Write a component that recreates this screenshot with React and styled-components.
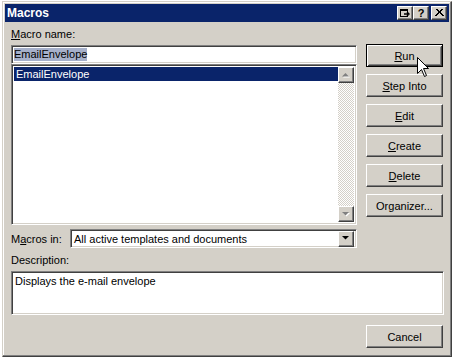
import React from 'react';
import styled, { createGlobalStyle, css } from 'styled-components';

const FACE = '#d4d0c8';
const NAVY = '#0a246a';

const GlobalStyle = createGlobalStyle`
  html, body {
    margin: 0;
    padding: 0;
    background: #fff;
  }
  body {
    font-family: "Liberation Sans", Arial, sans-serif;
    font-size: 11px;
    color: #000;
  }
  * { box-sizing: border-box; }
`;

const raised = css`
  border: 1px solid;
  border-color: #fff #404040 #404040 #fff;
  box-shadow: inset -1px -1px #808080, inset 1px 1px ${FACE};
`;

const sunken = css`
  border: 1px solid;
  border-color: #808080 #fff #fff #808080;
  box-shadow: inset 1px 1px #404040, inset -1px -1px ${FACE};
`;

const Window = styled.div`
  margin: 1px 0 0 2px;
  width: 450px;
  height: 356px;
  background: ${FACE};
  border: 1px solid;
  border-color: ${FACE} #404040 #404040 ${FACE};
  box-shadow: inset -1px -1px #808080, inset 1px 1px #fff;
  padding: 2px;
  display: flex;
  flex-direction: column;
  position: relative;
`;

const TitleBar = styled.div`
  height: 18px;
  background: ${NAVY};
  display: flex;
  align-items: center;
  padding: 0 2px 0 2px;
`;

const Title = styled.div`
  flex: 1;
  color: #fff;
  font-weight: bold;
  font-size: 12px;
`;

const CaptionButtons = styled.div`
  display: flex;
`;

const CaptionButton = styled.div`
  width: 16px;
  height: 14px;
  background: ${FACE};
  ${raised};
  display: flex;
  align-items: center;
  justify-content: center;
  margin-left: ${p => (p.$gap ? '2px' : '0')};
  font-weight: bold;
  font-size: 11px;
  line-height: 1;
`;

const Body = styled.div`
  flex: 1;
  padding: 6px 6px 0 6px;
  display: flex;
  flex-direction: column;
`;

const Top = styled.div`
  display: grid;
  grid-template-columns: 346px 77px;
  column-gap: 9px;
`;

const LeftCol = styled.div`
  display: flex;
  flex-direction: column;
`;

const Label = styled.div`
  height: 13px;
  line-height: 13px;
  margin-bottom: 4px;
`;

const TextField = styled.div`
  height: 19px;
  background: #fff;
  ${sunken};
  padding: 2px 2px;
  display: flex;
  align-items: center;
`;

const SelectedText = styled.span`
  background: #a6b0ca;
  line-height: 13px;
`;

const ListBox = styled.div`
  height: 161px;
  background: #fff;
  ${sunken};
  padding: 2px;
  display: flex;
`;

const ListItems = styled.div`
  flex: 1;
`;

const ListItem = styled.div`
  height: 14px;
  line-height: 14px;
  padding-left: 2px;
  background: ${p => (p.$selected ? NAVY : 'transparent')};
  color: ${p => (p.$selected ? '#fff' : '#000')};
`;

const ScrollBar = styled.div`
  width: 16px;
  display: flex;
  flex-direction: column;
  background-color: #fff;
  background-image:
    linear-gradient(45deg, ${FACE} 25%, transparent 25%, transparent 75%, ${FACE} 75%),
    linear-gradient(45deg, ${FACE} 25%, transparent 25%, transparent 75%, ${FACE} 75%);
  background-size: 2px 2px;
  background-position: 0 0, 1px 1px;
`;

const ScrollTrack = styled.div`
  flex: 1;
`;

const ArrowButton = styled.div`
  width: 16px;
  height: 16px;
  background: ${FACE};
  ${raised};
  display: flex;
  align-items: center;
  justify-content: center;
`;

const ComboRow = styled.div`
  margin-top: 4px;
  display: flex;
  align-items: center;
`;

const ComboLabel = styled.div`
  width: 59px;
`;

const Combo = styled.div`
  flex: 1;
  height: 19px;
  background: #fff;
  ${sunken};
  padding: 2px;
  display: flex;
  align-items: center;
`;

const ComboText = styled.div`
  flex: 1;
  padding-left: 1px;
`;

const RightCol = styled.div`
  display: flex;
  flex-direction: column;
  gap: 7px;
  padding-top: 16px;
`;

const Button = styled.div`
  height: 23px;
  width: 77px;
  background: ${FACE};
  display: flex;
  align-items: center;
  justify-content: center;
  ${p =>
    p.$default
      ? css`
          border: 1px solid #000;
          box-shadow: inset 1px 1px #fff, inset -1px -1px #404040,
            inset 2px 2px ${FACE}, inset -2px -2px #808080;
        `
      : raised};
`;

const DescLabel = styled(Label)`
  margin-top: 6px;
`;

const DescBox = styled.div`
  height: 44px;
  width: 433px;
  background: #fff;
  ${sunken};
  padding: 3px 3px;
`;

const Footer = styled.div`
  margin-top: 10px;
  display: flex;
  justify-content: flex-end;
`;

const Cursor = styled.svg`
  position: absolute;
  left: 414px;
  top: 55px;
`;

const Key = styled.span`
  text-decoration: underline;
  text-underline-offset: 1px;
`;

const Triangle = ({ dir = 'up', disabled }) => {
  const pts = dir === 'up' ? '3.5,0 0,3.5 7,3.5' : '0,0 7,0 3.5,3.5';
  return (
    <svg width="8" height="5" viewBox="0 0 8 5">
      {disabled && <polygon points={pts} transform="translate(1,1)" fill="#fff" />}
      <polygon points={pts} fill={disabled ? '#808080' : '#000'} />
    </svg>
  );
};

const HelpIcon = () => (
  <svg width="10" height="9" viewBox="0 0 10 9">
    <rect x="0.5" y="0.5" width="7" height="7" fill="none" stroke="#000" />
    <rect x="0" y="0" width="8" height="2" fill="#000" />
    <path d="M4 5 H8 M7 3 L9 5 L7 7" stroke="#000" strokeWidth="1.4" fill="none" />
  </svg>
);

const CloseIcon = () => (
  <svg width="9" height="8" viewBox="0 0 9 8">
    <path d="M1 0 L8 7 M8 0 L1 7 M2 0 L9 7 M7 0 L0 7" stroke="#000" strokeWidth="1" />
  </svg>
);

const App = () => (
  <>
    <GlobalStyle />
    <Window>
      <TitleBar>
        <Title>Macros</Title>
        <CaptionButtons>
          <CaptionButton><HelpIcon /></CaptionButton>
          <CaptionButton>?</CaptionButton>
          <CaptionButton $gap><CloseIcon /></CaptionButton>
        </CaptionButtons>
      </TitleBar>
      <Body>
        <Top>
          <LeftCol>
            <Label><Key>M</Key>acro name:</Label>
            <TextField><SelectedText>EmailEnvelope</SelectedText></TextField>
            <ListBox>
              <ListItems>
                <ListItem $selected>EmailEnvelope</ListItem>
              </ListItems>
              <ScrollBar>
                <ArrowButton><Triangle dir="up" disabled /></ArrowButton>
                <ScrollTrack />
                <ArrowButton><Triangle dir="down" disabled /></ArrowButton>
              </ScrollBar>
            </ListBox>
            <ComboRow>
              <ComboLabel>M<Key>a</Key>cros in:</ComboLabel>
              <Combo>
                <ComboText>All active templates and documents</ComboText>
                <ArrowButton><Triangle dir="down" /></ArrowButton>
              </Combo>
            </ComboRow>
          </LeftCol>
          <RightCol>
            <Button $default><Key>R</Key>un</Button>
            <Button><Key>S</Key>tep Into</Button>
            <Button><Key>E</Key>dit</Button>
            <Button><Key>C</Key>reate</Button>
            <Button><Key>D</Key>elete</Button>
            <Button>Organizer...</Button>
          </RightCol>
        </Top>
        <DescLabel>Description:</DescLabel>
        <DescBox>Displays the e-mail envelope</DescBox>
        <Footer>
          <Button>Cancel</Button>
        </Footer>
      </Body>
      <Cursor width="13" height="21" viewBox="0 0 13 21">
        <path d="M0.5 0.5 V16.5 L4.5 12.5 L7.5 19.5 L9.5 18.5 L6.5 11.5 H11.5 Z" fill="#fff" stroke="#000" />
      </Cursor>
    </Window>
  </>
);

export default App;
